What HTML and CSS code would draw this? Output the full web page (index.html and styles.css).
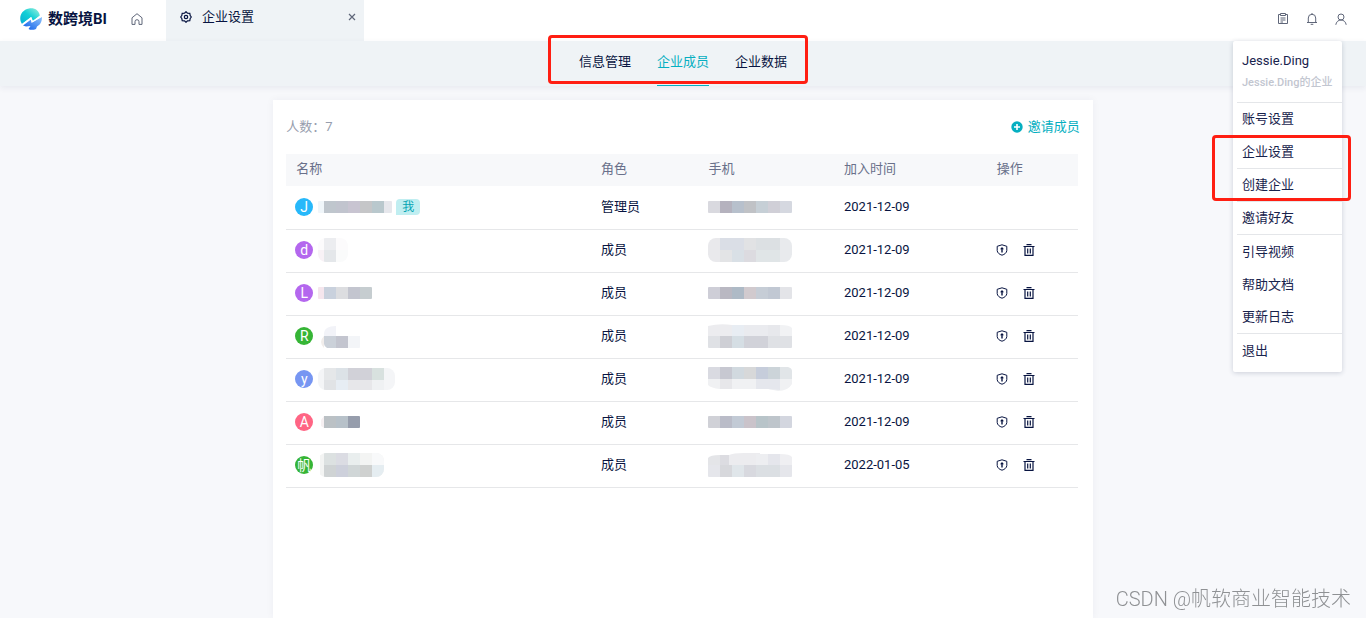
FILE: index.html
```html
<!DOCTYPE html>
<html lang="zh-CN">
<head>
<meta charset="utf-8">
<title>企业设置</title>
<link rel="stylesheet" href="styles.css">
</head>
<body>
<svg class="defs" aria-hidden="true">
  <symbol id="shield" viewBox="0 0 12 12"><path d="M6 .8 10.800 2.300V6.600C10.600 8.800 8.700 10.400 6 11.200 3.300 10.400 1.400 8.800 1.200 6.600V2.300Z" fill="none" stroke="currentColor" stroke-width="1"/><path d="M6 3 8 5.300H6.700V8.500H5.300V5.300H4Z" fill="currentColor"/></symbol>
  <symbol id="trash" viewBox="0 0 12 12"><path d="M.5 2.500h11M3.500.6h5M2 2.500v8.900h8V2.500M4.700 4.500v5M7.300 4.500v5" fill="none" stroke="currentColor" stroke-width="1.200"/></symbol>
</svg>

<header class="topbar">
  <a class="logo" href="#">
    <svg class="logo-mark" viewBox="0 0 24 24" aria-hidden="true">
      <defs>
        <linearGradient id="teal" x1="0" y1="1" x2="1" y2="0"><stop offset="0" stop-color="#07aed3"/><stop offset=".5" stop-color="#12cfd6"/><stop offset="1" stop-color="#9cf0dc"/></linearGradient>
        <linearGradient id="blue" x1="0" y1="1" x2="1" y2="0"><stop offset="0" stop-color="#0b5be8"/><stop offset="1" stop-color="#8fc4fb"/></linearGradient>
      </defs>
      <path d="M3 17C-1 11 2 3 10 1.500c6-.8 10 2 10.800 7L14 14l-2-4Z" fill="url(#teal)"/>
      <path d="M4 18.500 12 12.500l2 2.500L23 10c0 5-2 8-5 9.500l-1 2.500c-3 1.300-6 1-7.500 0l2-3-4.500.5Z" fill="url(#blue)"/>
      <path d="M3 17.800 12 11l1 4L22 9" fill="none" stroke="#fff" stroke-width="1.300"/>
    </svg>
    <span>数跨境BI</span>
  </a>
  <a class="home" href="#" aria-label="首页">
    <svg viewBox="0 0 12 12" class="icon"><path d="M1 11.400V4.800L6 .7l5 4.100v6.600H8V8.700a2 2 0 0 0-4 0v2.700Z" fill="none" stroke="currentColor"/></svg>
  </a>
  <div class="tab">
    <svg viewBox="0 0 12 12" class="icon"><path d="M6 .7 7.500 2.100 9.800 2.300 10.200 4.500 11.300 6 10.200 7.500 9.800 9.700 7.500 9.900 6 11.300 4.500 9.900 2.200 9.700 1.800 7.500.7 6 1.800 4.500 2.200 2.300 4.500 2.100Z" fill="none" stroke="currentColor" stroke-width="1.200"/><circle cx="6" cy="6" r="1.700" fill="none" stroke="currentColor" stroke-width="1.200"/></svg>
    <a href="#" class="tab-name">企业设置</a>
    <button class="tab-close" aria-label="关闭"><svg viewBox="0 0 8 8" class="icon-close"><path d="m1 1 6 6M7 1 1 7" stroke="currentColor" stroke-width="1.200"/></svg></button>
  </div>
  <div class="tools">
    <button aria-label="任务"><svg viewBox="0 0 12 12" class="icon"><path d="M3.500 1.500h-2v9h9v-9h-2M3.500.5h5v2h-5ZM3.500 5h5M3.500 7h5M3.500 9h2.500" fill="none" stroke="currentColor"/></svg></button>
    <button aria-label="通知"><svg viewBox="0 0 12 12" class="icon"><path d="M1 9.500h10M2.300 9.500V5a3.700 3.700 0 0 1 7.400 0v4.500M6 0v1.300M4.700 11.300h2.600" fill="none" stroke="currentColor"/></svg></button>
    <button aria-label="账户"><svg viewBox="0 0 12 12" class="icon"><circle cx="6" cy="4" r="3" fill="none" stroke="currentColor"/><path d="M.8 11.800C1.200 9 3.200 7 6 7s4.800 2 5.200 4.800" fill="none" stroke="currentColor"/></svg></button>
  </div>
  <nav class="menu" aria-label="账户菜单">
    <div class="menu-user"><strong>Jessie.Ding</strong><small>Jessie.Ding的企业</small></div>
    <a class="lined" href="#">账号设置</a>
    <a class="lined" href="#">企业设置</a>
    <a class="lined" href="#">创建企业</a>
    <a class="lined" href="#">邀请好友</a>
    <a href="#">引导视频</a>
    <a href="#">帮助文档</a>
    <a class="lined" href="#">更新日志</a>
    <a href="#">退出</a>
    <span class="mark mark-menu"></span>
  </nav>
</header>

<nav class="subnav">
  <div class="subnav-links">
    <a href="#">信息管理</a>
    <a href="#" class="active">企业成员</a>
    <a href="#">企业数据</a>
    <span class="mark mark-nav"></span>
  </div>
</nav>

<main class="card">
  <div class="card-head">
    <span>人数：7</span>
    <a href="#" class="invite"><svg viewBox="0 0 12 12" class="icon"><circle cx="6" cy="6" r="5.700" fill="currentColor"/><path d="M6 3v6M3 6h6" stroke="#fff" stroke-width="1.600"/></svg>邀请成员</a>
  </div>
  <table class="members">
    <colgroup><col class="c-name"><col class="c-role"><col class="c-phone"><col class="c-date"><col></colgroup>
    <thead><tr><th>名称</th><th>角色</th><th>手机</th><th>加入时间</th><th>操作</th></tr></thead>
    <tbody>
      <tr>
        <td><div class="person"><span class="avatar sky">J</span><svg class="mosaic" width="74" height="12"><path fill="#f0f6fa" d="M0 0h6v12H0z"/><path fill="#bfc6cd" d="M6 0h12v12H6z"/><path fill="#c1c4ce" d="M18 0h12v12H18z"/><path fill="#c8c4d1" d="M30 0h12v12H30z"/><path fill="#c5c6c8" d="M42 0h12v12H42z"/><path fill="#b9c8cd" d="M54 0h12v12H54z"/><path fill="#e6e7ec" d="M66 0h8v12h-8z"/></svg><span class="me">我</span></div></td>
        <td>管理员</td>
        <td><svg class="phone" width="84" height="12"><path fill="#d9d9df" d="M0 0h12v12H0z"/><path fill="#b5b2be" d="M12 0h12v12H12z"/><path fill="#b7c0cc" d="M24 0h12v12H24z"/><path fill="#c0c2c6" d="M36 0h12v12H36z"/><path fill="#c6cfd6" d="M48 0h12v12H48z"/><path fill="#d0cfd7" d="M60 0h12v12H60z"/><path fill="#d5d8e0" d="M72 0h12v12H72z"/></svg></td>
        <td>2021-12-09</td><td></td>
      </tr>
      <tr>
        <td><div class="person"><span class="avatar purple">d</span><svg class="mosaic soft" width="30" height="24"><path fill="#fcfbfc" d="M0 0h30v12H0z"/><path fill="#f8f2f6" d="M0 12h6v12H0z"/><path fill="#ecedf0" d="M6 0h12v12H6z"/><path fill="#e4e7ea" d="M6 12h12v12H6z"/><path fill="#fafbfb" d="M18 12h12v12H18z"/></svg></div></td>
        <td>成员</td>
        <td><svg class="phone soft" width="84" height="24"><path fill="#e9e9ec" d="M0 0h12v24H0z"/><path fill="#dadee6" d="M12 0h24v12H12z"/><path fill="#e3e4e6" d="M12 12h12v12H12z"/><path fill="#d9e0e6" d="M24 12h12v12H24z"/><path fill="#e1e2e4" d="M36 0h12v12H36z"/><path fill="#dcdbe0" d="M36 12h12v12H36z"/><path fill="#dce0e3" d="M48 0h24v12H48z"/><path fill="#e0e5e7" d="M48 12h24v12H48z"/><path fill="#e8eaed" d="M72 0h12v24H72z"/></svg></td>
        <td>2021-12-09</td>
        <td><div class="actions"><button aria-label="权限"><svg class="icon"><use href="#shield"/></svg></button><button aria-label="删除"><svg class="icon"><use href="#trash"/></svg></button></div></td>
      </tr>
      <tr>
        <td><div class="person"><span class="avatar purple">L</span><svg class="mosaic" width="54" height="12"><path fill="#f5e6ed" d="M0 0h6v12H0z"/><path fill="#c9d1dd" d="M6 0h12v12H6z"/><path fill="#dcdde0" d="M18 0h12v12H18z"/><path fill="#c3c5cf" d="M30 0h12v12H30z"/><path fill="#c6cdd0" d="M42 0h12v12H42z"/></svg></div></td>
        <td>成员</td>
        <td><svg class="phone" width="84" height="12"><path fill="#ceced7" d="M0 0h12v12H0z"/><path fill="#b9b8c2" d="M12 0h12v12H12z"/><path fill="#aebac6" d="M24 0h12v12H24z"/><path fill="#d1cace" d="M36 0h12v12H36z"/><path fill="#c6cdd6" d="M48 0h12v12H48z"/><path fill="#c1c8d3" d="M60 0h12v12H60z"/><path fill="#e3e4e8" d="M72 0h12v12H72z"/></svg></td>
        <td>2021-12-09</td>
        <td><div class="actions"><button aria-label="权限"><svg class="icon"><use href="#shield"/></svg></button><button aria-label="删除"><svg class="icon"><use href="#trash"/></svg></button></div></td>
      </tr>
      <tr>
        <td><div class="person"><span class="avatar green">R</span><svg class="mosaic" width="42" height="24"><path fill="#f2f3f8" d="M6 10q0-8 12-8v10H6z"/><path fill="#f1edeb" d="M6 12v12q-3-3-3-6t3-6z"/><path fill="#cbd1d9" d="M6 12h12v12H9q-3-2-3-4z"/><path fill="#c3c5cf" d="M18 12h12v12H18z"/><path fill="#f3f5f8" d="M30 12h12v12H30z"/></svg></div></td>
        <td>成员</td>
        <td><svg class="phone" width="84" height="24"><path fill="#ececef" d="M0 2q12-3 24-1v11H0z"/><path fill="#e8edf3" d="M24 1h12v11H24z"/><path fill="#eaebef" d="M36 1h24v11H36z"/><path fill="#e7e8ec" d="M60 1h12v11H60z"/><path fill="#f1f2f4" d="M72 1q10 0 12 3v8H72z"/><path fill="#dfe1e5" d="M0 12h12v12H0zM60 12h24v12H60z"/><path fill="#cecfd5" d="M12 12h12v12H12z"/><path fill="#d5dee4" d="M24 12h12v12H24z"/><path fill="#d1d2d9" d="M36 12h24v12H36z"/></svg></td>
        <td>2021-12-09</td>
        <td><div class="actions"><button aria-label="权限"><svg class="icon"><use href="#shield"/></svg></button><button aria-label="删除"><svg class="icon"><use href="#trash"/></svg></button></div></td>
      </tr>
      <tr>
        <td><div class="person"><span class="avatar blue">y</span><svg class="mosaic soft" width="77" height="22"><path fill="#f4f5f7" d="M0 0h77v22H0z"/><path fill="#e5e7e9" d="M6 0h12v12H6z"/><path fill="#dce2e7" d="M18 0h12v12H18z"/><path fill="#d1d1d8" d="M30 0h24v12H30z"/><path fill="#d8e1df" d="M54 0h12v12H54z"/><path fill="#e1e3e6" d="M6 12h12v10H6z"/><path fill="#e7edf4" d="M18 12h12v10H18z"/><path fill="#e7e7ea" d="M30 12h24v10H30z"/><path fill="#eff1f3" d="M54 12h12v10H54z"/></svg></div></td>
        <td>成员</td>
        <td><svg class="phone" width="84" height="24"><path fill="#d9dae1" d="M0 0h12v12H0z"/><path fill="#c7c8d1" d="M12 0h12v12H12z"/><path fill="#d1d9df" d="M24 0h12v12H24z"/><path fill="#d7d8d9" d="M36 0h12v12H36z"/><path fill="#c6cddb" d="M48 0h12v12H48z"/><path fill="#ccd4d9" d="M60 0h12v12H60z"/><path fill="#e1e5e8" d="M72 0h8q4 1 4 4v8H72z"/><path fill="#f0f1f3" d="M0 12h84v5q-4 7-14 7l-10-2H12Q3 21 0 18z"/><path fill="#e7e7ea" d="M12 12h12v10H12z"/><path fill="#e5e7ed" d="M48 12h24v11l-12-1H48z"/></svg></td>
        <td>2021-12-09</td>
        <td><div class="actions"><button aria-label="权限"><svg class="icon"><use href="#shield"/></svg></button><button aria-label="删除"><svg class="icon"><use href="#trash"/></svg></button></div></td>
      </tr>
      <tr>
        <td><div class="person"><span class="avatar pink">A</span><svg class="mosaic" width="42" height="12"><path fill="#f6f0f2" d="M3 4l3-4v12l-3-2z"/><path fill="#bbc1c5" d="M6 0h12v12H6z"/><path fill="#b7c1c9" d="M18 0h12v12H18z"/><path fill="#969dac" d="M30 0h12v12H30z"/></svg></div></td>
        <td>成员</td>
        <td><svg class="phone" width="84" height="12"><path fill="#d0d1d7" d="M0 0h12v12H0z"/><path fill="#babcc8" d="M12 0h12v12H12z"/><path fill="#c2cad5" d="M24 0h12v12H24z"/><path fill="#cac3ca" d="M36 0h12v12H36z"/><path fill="#b8c4c9" d="M48 0h12v12H48z"/><path fill="#bec5cb" d="M60 0h12v12H60z"/><path fill="#d3d6df" d="M72 0h12v12H72z"/></svg></td>
        <td>2021-12-09</td>
        <td><div class="actions"><button aria-label="权限"><svg class="icon"><use href="#shield"/></svg></button><button aria-label="删除"><svg class="icon"><use href="#trash"/></svg></button></div></td>
      </tr>
      <tr>
        <td><div class="person"><span class="avatar green">帆</span><svg class="mosaic soft" width="66" height="24"><path fill="#f3f4f3" d="M2 0h64v24H2z"/><path fill="#dce1e1" d="M6 0h12v12H6z"/><path fill="#dbdce3" d="M18 0h12v12H18z"/><path fill="#e9eeee" d="M30 0h12v12H30z"/><path fill="#f8f9fa" d="M54 0h12v12H54z"/><path fill="#cfd3d4" d="M6 12h12v12H6z"/><path fill="#cdd0db" d="M18 12h12v12H18z"/><path fill="#d0d6d7" d="M30 12h12v12H30z"/><path fill="#cfd1d0" d="M42 12h12v12H42z"/><path fill="#e5edf1" d="M54 12h12v12H54z"/></svg></div></td>
        <td>成员</td>
        <td><svg class="phone" width="84" height="24"><path fill="#e4e5e8" d="M0 5q2-3 12-3v10H0z"/><path fill="#dcdce1" d="M12 2h9v10h-9z"/><path fill="#ececef" d="M21 2q4-2 15-2h16v12H21z"/><path fill="#edeef1" d="M48 1h12v11H48z"/><path fill="#e5e6ec" d="M60 1h12v11H60z"/><path fill="#efeff2" d="M72 1q10 0 12 3v8H72z"/><path fill="#e5e6eb" d="M0 12h12v12H0zM72 12h12v12H72z"/><path fill="#d7d8dc" d="M12 12h12v12H12z"/><path fill="#e0e6ea" d="M24 12h12v12H24z"/><path fill="#d8d9df" d="M36 12h12v12H36z"/><path fill="#dbdfe3" d="M48 12h24v12H48z"/></svg></td>
        <td>2022-01-05</td>
        <td><div class="actions"><button aria-label="权限"><svg class="icon"><use href="#shield"/></svg></button><button aria-label="删除"><svg class="icon"><use href="#trash"/></svg></button></div></td>
      </tr>
    </tbody>
  </table>
</main>
<div class="watermark">CSDN @帆软商业智能技术</div>
</body>
</html>
```
FILE: styles.css
```css
* { box-sizing: border-box; }
body {
  margin: 0;
  min-height: 100vh;
  display: flex;
  flex-direction: column;
  background: #f7f8fb;
  color: #081441;
  font: 13px/20px Roboto, "Noto Sans CJK SC", sans-serif;
}
a { color: inherit; text-decoration: none; }
button { padding: 0; border: 0; background: none; color: inherit; font: inherit; display: flex; }
.defs { position: absolute; width: 0; height: 0; }
.icon { width: 12px; height: 12px; display: block; flex: none; }

.topbar { position: relative; display: flex; height: 41px; background: #fff; }
.logo { display: flex; align-items: center; gap: 5px; padding: 0 0 4px 19px; font-size: 15px; font-weight: 700; }
.logo-mark { width: 24px; height: 24px; }
.home { display: flex; align-items: center; padding: 0 23px 4px 24px; color: #5f6679; }
.tab { display: flex; align-items: center; gap: 10px; width: 198px; padding: 0 8px 8px 14px; background: #eff3f6; }
.tab-name { flex: 1; }
.tab-close { color: #5f6679; }
.icon-close { width: 8px; height: 8px; }
.tools { display: flex; align-items: center; gap: 17px; margin-left: auto; padding: 0 19px 4px 0; color: #5f6679; }

.menu {
  position: absolute;
  z-index: 3;
  top: 41px;
  right: 24px;
  width: 109px;
  padding: 8px 0 5px 4px;
  border-radius: 2px;
  background: #fff;
  color: #18234d;
  box-shadow: 0 1px 5px rgba(30, 45, 80, .2);
}
.menu-user { display: grid; gap: 3px; padding: 2px 5px 10px; border-bottom: 1px solid #e4e6e9; white-space: nowrap; }
.menu-user strong { font-weight: 400; }
.menu-user small { color: #c2c6d0; font-size: 11px; line-height: 18px; font-weight: 500; }
.menu a { display: block; padding: 0 5px; line-height: 33px; }
.menu a.lined { line-height: 32px; border-bottom: 1px solid #e4e6e9; }

.mark { position: absolute; border: 3px solid #ff1e12; border-radius: 4px; pointer-events: none; }
.mark-menu { top: 94px; left: -21px; right: -9px; height: 66px; }
.mark-nav { top: -6px; left: -31px; right: -21px; height: 49px; }

.subnav { position: relative; z-index: 1; display: flex; justify-content: center; height: 45px; background: #eff3f6; box-shadow: 0 2px 6px rgba(30, 45, 80, .07); }
.subnav-links { position: relative; display: flex; gap: 26px; }
.subnav-links a { line-height: 42px; border-bottom: 1px solid transparent; }
.subnav-links .active { color: #05afc1; border-color: #05afc1; }

.card { flex: 1; width: 60%; min-width: 640px; margin: 14px auto 0; padding: 17px 13px 20px; background: #fff; box-shadow: 0 0 8px rgba(30, 45, 80, .05); }
.card-head { display: flex; justify-content: space-between; padding-bottom: 17px; color: #979eae; }
.invite { display: flex; align-items: center; gap: 5px; color: #05afc1; }

.members { width: calc(100% - 2px); border-collapse: collapse; table-layout: fixed; }
.c-name { width: 38.5%; }
.c-role { width: 13.6%; }
.c-phone { width: 17.1%; }
.c-date { width: 19.3%; }
.members th { height: 32px; padding: 0 10px 2px; background: #f7f8fa; color: #69708a; font-weight: 400; text-align: left; }
.members td { height: 43px; padding: 0 9px 1px 10px; border-bottom: 1px solid #e6e7e9; }
.members td:first-child { padding-left: 9px; }
.person { display: flex; align-items: center; }
.avatar { width: 18px; height: 18px; border-radius: 50%; color: #fff; font-size: 14px; line-height: 18px; text-align: center; }
.sky { background: #27b8fa; }
.purple { background: #b467ee; }
.green { background: #36b536; }
.blue { background: #7796f2; }
.pink { background: #ff6584; }
.mosaic { margin-left: 5px; border-radius: 1px; }
.phone { display: block; margin-left: -1px; border-radius: 1px; }
.soft { border-radius: 8px; }
.me { margin-left: 4px; padding: 0 6px; border-radius: 4px 4px 4px 0; background: #c0eef1; color: #05a4b3; font-size: 12px; line-height: 16px; }
.actions { display: flex; gap: 15px; margin-left: -1px; }

.watermark { position: fixed; right: 15px; bottom: 6px; color: #8f9194; font-size: 20px; line-height: 26px; font-weight: 300; }
```
